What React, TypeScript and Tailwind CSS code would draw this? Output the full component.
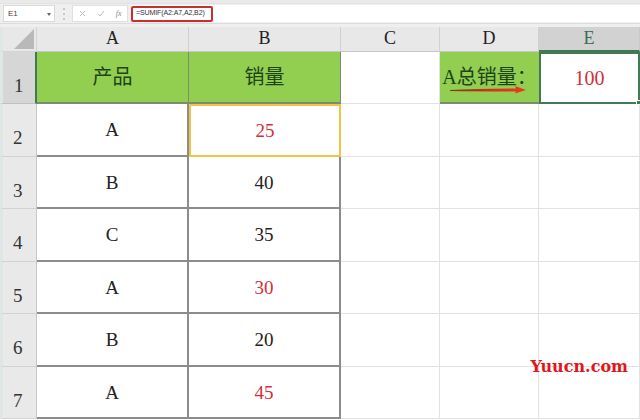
import React from "react"

const serif = { fontFamily: '"Liberation Serif", "Noto Sans CJK SC", serif' }

const cols = ["A", "B", "C", "D", "E"]
const colW = ["w-[152px]", "w-[152px]", "w-[99px]", "w-[99px]", "w-[101px]"]

const rows: { a: string; b: string; red: boolean }[] = [
  { a: "A", b: "25", red: true },
  { a: "B", b: "40", red: false },
  { a: "C", b: "35", red: false },
  { a: "A", b: "30", red: true },
  { a: "B", b: "20", red: false },
  { a: "A", b: "45", red: true },
]

function FormulaBar() {
  return (
    <div className="flex h-[27px] shrink-0 flex-col bg-[#efefef]">
      <div className="h-[4px] border-b border-[#e2e2e2] bg-[#e9e9e9]" />
      <div className="flex h-[19px] items-center pl-[3px]">
        <div className="relative flex h-[17px] w-[52px] items-center border border-[#dadada] bg-white pl-[4px] text-[8px] text-[#444]" style={{ fontFamily: '"Liberation Sans", sans-serif' }}>
          E1
          <span className="absolute right-[3px] top-[7px] h-0 w-0 border-x-[2px] border-t-[3px] border-x-transparent border-t-[#666]" />
        </div>
        <div className="ml-[8px] flex h-[12px] w-[2px] flex-col justify-between">
          <span className="h-[2px] w-[2px] bg-[#c8c8c8]" />
          <span className="h-[2px] w-[2px] bg-[#c8c8c8]" />
          <span className="h-[2px] w-[2px] bg-[#c8c8c8]" />
        </div>
        <div className="ml-[7px] flex h-[17px] w-[56px] items-center justify-around border border-[#e0e0e0] bg-white text-[#b5b5b5]">
          <svg width="7" height="7" viewBox="0 0 7 7"><path d="M1 1 L6 6 M6 1 L1 6" stroke="#bdbdbd" strokeWidth="1" /></svg>
          <svg width="8" height="7" viewBox="0 0 8 7"><path d="M1 4 L3 6 L7 1" stroke="#bdbdbd" strokeWidth="1" fill="none" /></svg>
          <span className="text-[8px] italic text-[#888]" style={serif}>fx</span>
        </div>
        <div className="ml-[3px] flex h-[17px] flex-1 items-center bg-white">
          <div className="flex h-[16px] w-[82px] items-center whitespace-nowrap rounded-[2px] border-2 border-[#c9302c] pl-[3px] text-[7px] tracking-[-0.1px] text-[#333]" style={{ fontFamily: '"Liberation Sans", sans-serif' }}>
            =SUMIF(A2:A7,A2,B2)
          </div>
        </div>
      </div>
      <div className="h-[4px] border-t border-[#dcdcdc] bg-[#efefef]" />
    </div>
  )
}

function Arrow() {
  return (
    <svg className="absolute left-[8px] top-[33px]" width="80" height="10" viewBox="0 0 80 10">
      <defs>
        <linearGradient id="ar" x1="0" x2="1" y1="0" y2="0">
          <stop offset="0" stopColor="#7a3a10" />
          <stop offset="0.5" stopColor="#d2301c" />
          <stop offset="1" stopColor="#ef3a1a" />
        </linearGradient>
      </defs>
      <path d="M2 5 Q30 4 68 3.5 L67 1 L78 5 L67 8.5 L68 6.5 Q30 6.5 2 6 Z" fill="url(#ar)" />
    </svg>
  )
}

export default function App() {
  return (
    <div className="relative flex h-[420px] w-[640px] flex-col overflow-hidden bg-white" style={serif}>
      <FormulaBar />

      {/* Column header */}
      <div className="flex h-[24.5px] shrink-0 bg-[#e8e8e8]">
        <div className="relative w-[37px] border-r border-b border-[#d4d4d4] border-l-[3px] border-l-[#dfe7e4]">
          <div className="absolute bottom-[2px] right-[2px] h-0 w-0 border-b-[20px] border-l-[20px] border-b-[#b9b9b9] border-l-transparent" />
        </div>
        {cols.map((c, i) => (
          <div
            key={c}
            className={`${colW[i]} flex items-center justify-center border-r text-[18px] ${
              c === "E"
                ? "border-b-2 border-b-[#3f7a52] border-r-[#c8c8c8] bg-[#d2d2d2] text-[#3f6b50]"
                : "border-b border-b-[#c6c6c6] border-r-[#d0d0d0] text-[#222]"
            }`}
          >
            {c}
          </div>
        ))}
      </div>

      {/* Row 1 */}
      <div className="flex h-[52.5px] shrink-0">
        <div className="flex w-[37px] items-end border-r-2 border-b border-r-[#3f7a52] border-b-[#c0c0c0] border-l-[3px] border-l-[#dfe7e4] bg-[#d6d6d6] pb-[3px] pl-[11px] text-[19px] text-[#333]">
          1
        </div>
        <div className="flex w-[152px] items-center justify-center border-r border-b-2 border-[#7d8c6e] bg-[#92cf50] text-[20px] text-[#1d4316]">
          产品
        </div>
        <div className="flex w-[152px] items-center justify-center border-r border-b-2 border-[#7d8c6e] bg-[#92cf50] text-[20px] text-[#1d4316]">
          销量
        </div>
        <div className="w-[99px] border-r border-b border-[#e2e2e2]" />
        <div className="relative flex w-[99px] items-center justify-center border-b-2 border-[#7d8c6e] bg-[#92cf50] text-[20px] text-[#1d4316]">
          A总销量：
          <Arrow />
        </div>
        <div className="relative flex w-[101px] items-center justify-center border-2 border-[#427a55] text-[20px] text-[#d0303a]">
          100
          <span className="absolute -bottom-[3px] -right-[3px] h-[5px] w-[5px] border border-white bg-[#427a55]" />
        </div>
      </div>

      {/* Data rows */}
      {rows.map((r, i) => (
        <div key={i} className="flex h-[52.5px] shrink-0">
          <div className="flex w-[37px] items-end border-r border-b border-r-[#c8c8c8] border-b-[#d2d2d2] border-l-[3px] border-l-[#dfe7e4] bg-[#e9e9e9] pb-[3px] pl-[10px] text-[19px] text-[#333]">
            {i + 2}
          </div>
          <div className="flex w-[152px] items-center justify-center border-r-2 border-b-2 border-[#8c8c8c] pt-[2px] text-[19px] text-[#222]">
            {r.a}
          </div>
          {i === 0 ? (
            <div className="flex w-[152px] items-center justify-center border-2 border-[#f2c24a] pt-[2px] text-[19px] text-[#d0303a]">
              {r.b}
            </div>
          ) : (
            <div className={`flex w-[152px] items-center justify-center border-r-2 border-b-2 border-[#8c8c8c] pt-[2px] text-[19px] ${r.red ? "text-[#d0303a]" : "text-[#222]"}`}>
              {r.b}
            </div>
          )}
          <div className="w-[99px] border-r border-b border-[#e2e2e2]" />
          <div className="w-[99px] border-r border-b border-[#e2e2e2]" />
          <div className="w-[101px] border-r border-b border-[#e2e2e2]" />
        </div>
      ))}

      {/* Watermark */}
      <div className="absolute bottom-[45px] right-[12px] text-[16px] font-bold leading-none text-[#e0161c]" style={{ fontFamily: '"DejaVu Serif", "Liberation Serif", serif' }}>
        Yuucn.com
      </div>
    </div>
  )
}
